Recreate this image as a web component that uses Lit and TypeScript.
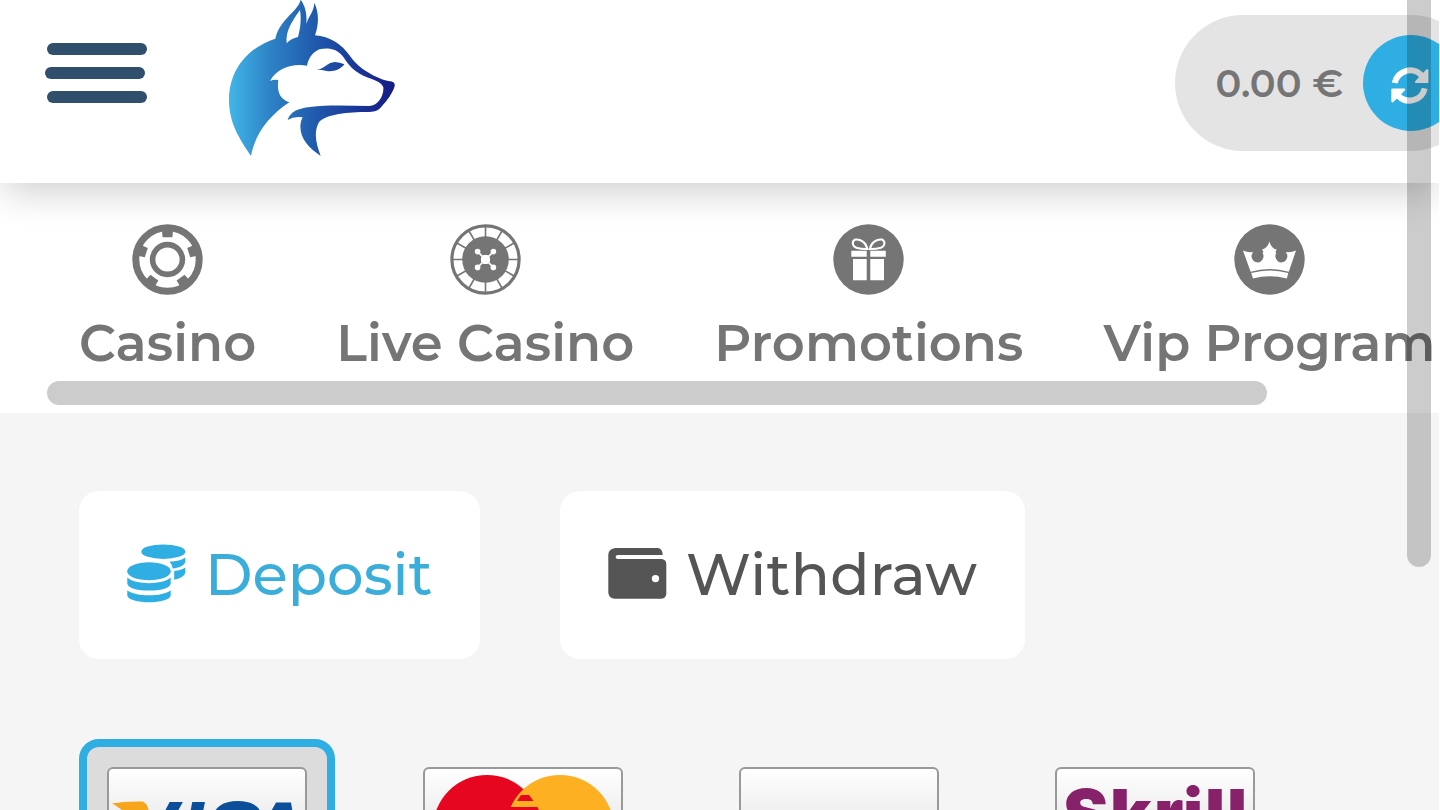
import { LitElement, html, svg, css } from "lit";
import { customElement } from "lit/decorators.js";

const chip = svg`
  <circle cx="35.5" cy="35.5" r="31.7" fill="none" stroke="#757575" stroke-width="7"/>
  <circle cx="35.5" cy="35.5" r="14.9" fill="none" stroke="#757575" stroke-width="5.6"/>
  ${[0, 72, 144, 216, 288].map((a) => svg`<path transform="rotate(${a} 35.5 35.5)" d="M29.8 5H41.2L40.4 13.2H30.6Z" fill="#757575"/>`)}`;

const roulette = svg`
  <circle cx="35.5" cy="35.5" r="33.6" fill="none" stroke="#757575" stroke-width="3.2"/>
  ${[0, 30, 60, 90, 120, 150].map((a) => svg`<path transform="rotate(${a} 35.5 35.5)" d="M35.5 2V69" stroke="#757575" stroke-width="1.6"/>`)}
  <circle cx="35.5" cy="35.5" r="23.3" fill="#757575"/>
  <path d="M27.5 27.5L43.5 43.5M43.5 27.5L27.5 43.5" stroke="#fff" stroke-width="1.7"/>
  <g fill="#fff">
    <path d="M33.5 31H37.5L40 33.5V37.5L37.5 40H33.5L31 37.5V33.5Z"/>
    <circle cx="27.6" cy="27.6" r="2.8"/><circle cx="43.4" cy="27.6" r="2.8"/>
    <circle cx="27.6" cy="43.4" r="2.8"/><circle cx="43.4" cy="43.4" r="2.8"/>
  </g>`;

const gift = svg`
  <circle cx="35.5" cy="35.5" r="35.2" fill="#757575"/>
  <path d="M18.3 26.7H33.7V32.8H18.3ZM37.3 26.7H52.8V32.8H37.3ZM20 34.9H33.7V56.3H20ZM37.3 34.9H51V56.3H37.3Z" fill="#fff"/>
  <path d="M34.4 25C33.2 18.6 27.5 14.8 22.3 15.5C18.4 17.3 19.2 22.2 23.3 23.8Q28.5 25.2 34.4 25ZM36.8 25C38 18.6 43.7 14.8 48.9 15.5C52.8 17.3 52 22.2 47.9 23.8Q42.7 25.2 36.8 25Z" fill="none" stroke="#fff" stroke-width="2"/>`;

const crown = svg`
  <circle cx="35.5" cy="35.5" r="35.2" fill="#757575"/>
  <path d="M9 26.6Q14.3 28.8 19.2 27.9A6 6.2 0 1 0 28.6 28.9Q30.2 27.4 27.9 25.8C31.8 24.5 34.3 22 35.4 17.6C36.6 22 39 24.5 43 25.8Q40.6 27.4 42.3 28.9A6 6.2 0 1 0 51.7 27.9Q56.6 28.8 62 26.6L54.8 47.7Q35.5 42.3 16.6 47.7Z" fill="#fff"/>
  <path d="M17.2 49.1Q35.5 43.9 54.3 49.1L52.8 54.4Q35.5 50.2 19 54.4Z" fill="#fff"/>`;

const navItems = [
  { text: "Casino", icon: chip },
  { text: "Live Casino", icon: roulette },
  { text: "Promotions", icon: gift },
  { text: "Vip Program", icon: crown },
];

const coins = svg`
  <g fill="#2eaee3">
    <ellipse cx="36.3" cy="7.7" rx="22" ry="7.2"/>
    <path d="M42.5 17.8Q53 17.2 58.3 13.5V17.8C57.4 22 51.3 24 45.7 24.4Q45.3 20.6 42.5 17.8Z"/>
    <path d="M47.2 27.1Q54.5 26.4 58.3 23.5V28.5Q57.5 33.6 47.2 35.7Z"/>
    <ellipse cx="22" cy="27.3" rx="21.8" ry="9"/>
    <path d="M.3 33.6C8 41 36 41 43.7 33.6V39.4C42.5 49 1.5 49 .3 39.4Z"/>
    <path d="M.3 46.2C8 53 36 53 43.7 46.2V51.5C42.5 60.5 1.5 60.5 .3 51.5Z"/>
  </g>`;

const wallet = svg`
  <path fill="#555" fill-rule="evenodd" d="M7.5 4H49.5Q54.6 4.3 54.7 11H10Q7.6 11.1 7.6 13T10 15H53.5Q58.3 15.5 58.3 20V50Q58 54.2 53.5 54.7H7Q.6 54.3.3 48.5V10.5Q.7 4.6 7.5 4ZM47.5 30.9A3.7 3.7 0 1 0 47.5 38.3A3.7 3.7 0 1 0 47.5 30.9Z"/>`;

@customElement("app-root")
export class AppRoot extends LitElement {
  static styles = css`
    :host { display: block; width: 1439px; height: 810px; overflow: hidden; position: relative; background: #fff; font-family: Montserrat, Inter, "Liberation Sans", sans-serif; }
    svg { display: block; flex: none; overflow: visible; }
    .header { position: relative; z-index: 2; height: 183px; display: flex; align-items: flex-start; background: #fff; box-shadow: 0 12px 36px -4px rgba(0, 0, 0, .2); }
    .menu { display: flex; flex-direction: column; gap: 12px; padding: 43px 0 0 45px; width: 210px; box-sizing: border-box; flex: none; }
    .bar { width: 100px; height: 12px; border-radius: 6px; background: #304f6d; margin-left: 2px; }
    .bar.mid { margin-left: 0; }
    .balance { flex: none; display: flex; align-items: center; justify-content: flex-end; gap: 20px; box-sizing: border-box; width: 304px; height: 136px; margin: 15px 0 0 765px; padding: 0 20px 0 38px; border-radius: 68px; background: #e4e4e4; font-size: 38.4px; font-weight: 600; color: #757575; white-space: nowrap; }
    .refresh { width: 96px; height: 96px; flex: none; border-radius: 50%; background: #2eaee3; }
    .nav { height: 230px; box-sizing: border-box; padding: 41px 0 0 79px; display: flex; gap: 80px; }
    .item { flex: none; display: flex; flex-direction: column; align-items: center; gap: 16px; font-size: 51.2px; font-weight: 600; letter-spacing: .08px; color: #757575; white-space: nowrap; }
    .main { background: #f5f5f5; height: 397px; box-sizing: border-box; padding: 78px 79px 0; display: flex; flex-direction: column; gap: 80px; }
    .tabs { display: flex; gap: 80px; flex: none; }
    .tab { box-sizing: border-box; height: 168px; padding: 0 48px 2px; border-radius: 20px; background: #fff; display: flex; align-items: center; gap: 19px; width: 401px; font-size: 57.6px; font-weight: 500; color: #555; white-space: nowrap; }
    .tab.on { color: #3aaddb; }
    .tab.wide { width: 465px; letter-spacing: .3px; }
    .methods { display: flex; gap: 60px; }
    .method { box-sizing: border-box; flex: none; width: 256px; height: 184px; padding: 20px; border: 8px solid transparent; border-radius: 20px; }
    .method.on { background: #dcdcdc; border-color: #2eaee3; }
    .card { box-sizing: border-box; width: 200px; height: 128px; border: 2px solid #999; border-radius: 6px; background: linear-gradient(#fff, #e9e9e9 48%, #ddd); overflow: hidden; }
    .vscroll, .hscroll { position: absolute; z-index: 5; background: rgba(0, 0, 0, .2); }
    .vscroll { left: 1407px; top: -12px; width: 24px; height: 579px; border-radius: 12px; }
    .hscroll { left: 47px; top: 381px; width: 1220px; height: 24px; border-radius: 12px; }
    .visa { font-family: "Liberation Sans", sans-serif; font-weight: 700; font-style: italic; }
    .skrill { font-family: Inter, sans-serif; font-weight: 900; }
  `;

  render() {
    return html`
      <div class="header">
        <div class="menu"><div class="bar"></div><div class="bar mid"></div><div class="bar"></div></div>
        <svg width="200" height="180" viewBox="0 0 600 540">
          <defs><linearGradient id="wolf" gradientUnits="userSpaceOnUse" x1="58" y1="0" x2="555" y2="0">
            <stop offset="0" stop-color="#41b5e8"/><stop offset=".25" stop-color="#2d82c5"/><stop offset=".52" stop-color="#2059ad"/><stop offset=".78" stop-color="#193598"/><stop offset="1" stop-color="#161c84"/>
          </linearGradient></defs>
          <path fill="url(#wolf)" d="M123 468C95 425 57 375 57 300C57 200 125 138 196 116C203 82 224 60 249 35C262 22 270 10 272 -1C288 22 291 45 289 72C297 45 311 38 313 8C326 34 328 70 315 106C360 110 395 132 420 168C442 199 470 217 502 232C520 242 540 243 549 246Q557 250 553 262C545 284 530 303 518 316C505 335 490 336 470 336C420 336 345 342 326 368C310 400 319 432 332 468C300 446 270 420 271 377Q272 362 278 352Q252 348 233 360C240 335 265 325 300 321C360 314 420 318 478 318C502 316 522 290 520 262C515 245 490 239 460 227C430 213 415 194 400 171C380 143 350 143 328 148C305 158 295 178 291 197C250 189 200 203 180 243Q192 237 205 240C200 275 210 297 238 307C180 345 135 400 123 468Z"/>
          <path fill="#fff" d="M230 130C226 92 247 62 270 30C275 60 270 90 264 111Q243 115 230 130Z"/>
          <path fill="url(#wolf)" d="M320 209C345 207 350 187 375 186Q390 187 403 193C390 210 370 216 350 213Q335 209 320 209Z"/>
        </svg>
        <div class="balance">
          <span>0.00 €</span>
          <div class="refresh">
            <svg width="96" height="96" fill="none" stroke="#fff" stroke-width="6">
              <path d="M31.7 48A15.6 15.6 0 0 1 58.5 40.5M61.7 53.3A15.6 15.6 0 0 1 35.5 61"/>
              <path d="M64.2 35.3V46.9H53.2ZM29.5 54.6H41L29.5 66.2Z" fill="#fff" stroke-width="2.4" stroke-linejoin="round"/>
            </svg>
          </div>
        </div>
      </div>
      <div class="nav">
        ${navItems.map((n) => html`<div class="item"><svg width="71" height="71">${n.icon}</svg><span>${n.text}</span></div>`)}
      </div>
      <div class="main">
        <div class="tabs">
          <div class="tab on"><svg width="59" height="60">${coins}</svg><span>Deposit</span></div>
          <div class="tab wide"><svg width="59" height="60">${wallet}</svg><span>Withdraw</span></div>
        </div>
        <div class="methods">
          <div class="method on"><div class="card"><svg width="196" height="124">
            <text class="visa" y="93" x="9 70 95 135" font-size="88" fill="#0b4f9a">VISA</text>
            <path d="M3 34.5Q17 32 33 32.5Q37 33 39 39L47 68H30Q22 44 3 34.5Z" fill="#f7a51b"/>
          </svg></div></div>
          <div class="method"><div class="card"><svg width="196" height="124">
            <circle cx="62" cy="60" r="54" fill="#e6061f"/><circle cx="135" cy="60" r="54" fill="#fcb022"/>
            <path d="M96 26H104L108.500 32H92ZM84 38H112.500L116 46H80Z" fill="#e6061f"/>
            <path d="M90 32H109.500L112.500 38H86.500Z" fill="#fcb022"/>
          </svg></div></div>
          <div class="method"><div class="card"></div></div>
          <div class="method"><div class="card"><svg width="196" height="124">
            <text class="skrill" y="69" x="6 53 97 126 148 170" font-size="68" fill="#86216a">Skrill</text>
          </svg></div></div>
        </div>
      </div>
      <div class="hscroll"></div>
      <div class="vscroll"></div>
    `;
  }
}
